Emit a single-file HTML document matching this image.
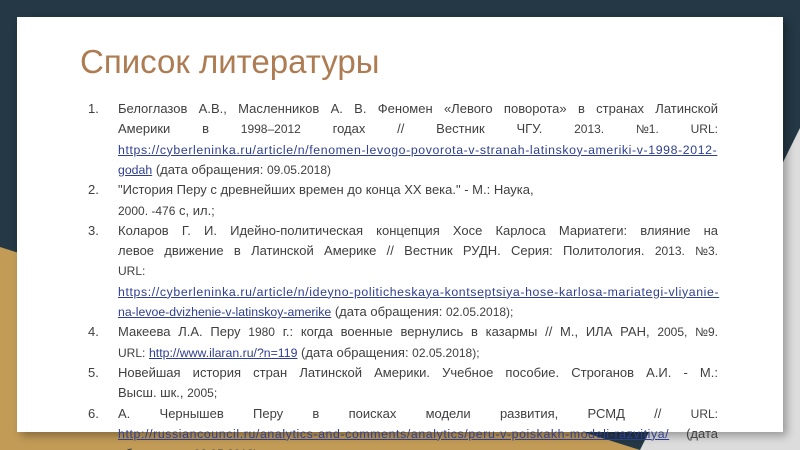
<!DOCTYPE html>
<html><head><meta charset="utf-8"><style>
html,body{margin:0;padding:0;width:800px;height:450px;overflow:hidden;}
body{position:relative;background:#243845;font-family:"Liberation Sans",sans-serif;}
.gold{position:absolute;left:0;top:0;width:800px;height:450px;}
.card{position:absolute;left:17px;top:17px;width:766px;height:415px;background:#fff;box-shadow:4px 4px 8px rgba(0,0,0,0.3);}
h1{position:absolute;left:80px;top:40px;margin:0;font-weight:normal;font-size:33px;color:#ad7c52;line-height:44px;}
.t{position:absolute;left:0;top:99px;width:800px;height:351px;overflow:hidden;font-size:13px;color:#404040;}
.l{position:absolute;left:118px;width:600px;height:20px;line-height:20px;white-space:nowrap;}
.j{text-align:justify;text-align-last:justify;white-space:normal;}
.n{position:absolute;left:88px;line-height:20px;}
a{color:#2f3f8f;text-decoration:underline;font-size:12.3px;}
.w{letter-spacing:0.62px;}
.s{font-size:12px;}
.ib{display:inline-block;white-space:nowrap;}
</style></head><body>
<svg class="gold" width="800" height="450"><polygon points="0,247 640,450 0,450" fill="#c29b57"/><polygon points="800,128 800,450 640,450" fill="#dcdcdc"/></svg>
<div class="card"></div>
<h1>Список литературы</h1>
<div class="t">
<div class="n" style="top:0">1.</div>
<div class="l j" style="top:0">Белоглазов А.В., Масленников А. В. Феномен «Левого поворота» в странах Латинской</div>
<div class="l j" style="top:20.3px">Америки в <span class="s">1998–2012</span> годах // Вестник ЧГУ. <span class="s">2013.</span> <span class="s ib">№1.</span> <span class="s">URL:</span></div>
<div class="l" style="top:40.6px"><a class="w">https://cyberleninka.ru/article/n/fenomen-levogo-povorota-v-stranah-latinskoy-ameriki-v-1998-2012-</a></div>
<div class="l" style="top:60.9px"><a>godah</a> (дата обращения: <span class="s">09.05.2018)</span></div>
<div class="n" style="top:81.2px">2.</div>
<div class="l" style="top:81.2px">"История Перу с древнейших времен до конца XX века." - М.: Наука,</div>
<div class="l" style="top:101.5px"><span class="s">2000. -476</span> с, ил.;</div>
<div class="n" style="top:121.8px">3.</div>
<div class="l j" style="top:121.8px">Коларов Г. И. Идейно-политическая концепция Хосе Карлоса Мариатеги: влияние на</div>
<div class="l j" style="top:142.1px">левое движение в Латинской Америке // Вестник РУДН. Серия: Политология. <span class="s">2013.</span> <span class="s ib">№3.</span></div>
<div class="l" style="top:162.4px"><span class="s">URL:</span></div>
<div class="l" style="top:182.7px"><a class="w">https://cyberleninka.ru/article/n/ideyno-politicheskaya-kontseptsiya-hose-karlosa-mariategi-vliyanie-</a></div>
<div class="l" style="top:203px"><a>na-levoe-dvizhenie-v-latinskoy-amerike</a> (дата обращения: <span class="s">02.05.2018);</span></div>
<div class="n" style="top:223.3px">4.</div>
<div class="l j" style="top:223.3px">Макеева Л.А. Перу <span class="s">1980</span> г.: когда военные вернулись в казармы // М., ИЛА РАН, <span class="s">2005,</span> <span class="s ib">№9.</span></div>
<div class="l" style="top:243.6px"><span class="s">URL:</span> <a>http://www.ilaran.ru/?n=119</a> (дата обращения: <span class="s">02.05.2018);</span></div>
<div class="n" style="top:263.9px">5.</div>
<div class="l j" style="top:263.9px">Новейшая история стран Латинской Америки. Учебное пособие. Строганов А.И. - М.:</div>
<div class="l" style="top:284.2px">Высш. шк., <span class="s">2005;</span></div>
<div class="n" style="top:304.5px">6.</div>
<div class="l j" style="top:304.5px">А. Чернышев Перу в поисках модели развития, РСМД // <span class="s">URL:</span></div>
<div class="l j" style="top:324.8px"><a class="w">http://russiancouncil.ru/analytics-and-comments/analytics/peru-v-poiskakh-modeli-razvitiya/</a> (дата</div>
<div class="l" style="top:345.1px">обращения: <span class="s">02.05.2018)</span></div>
</div>
</body></html>
